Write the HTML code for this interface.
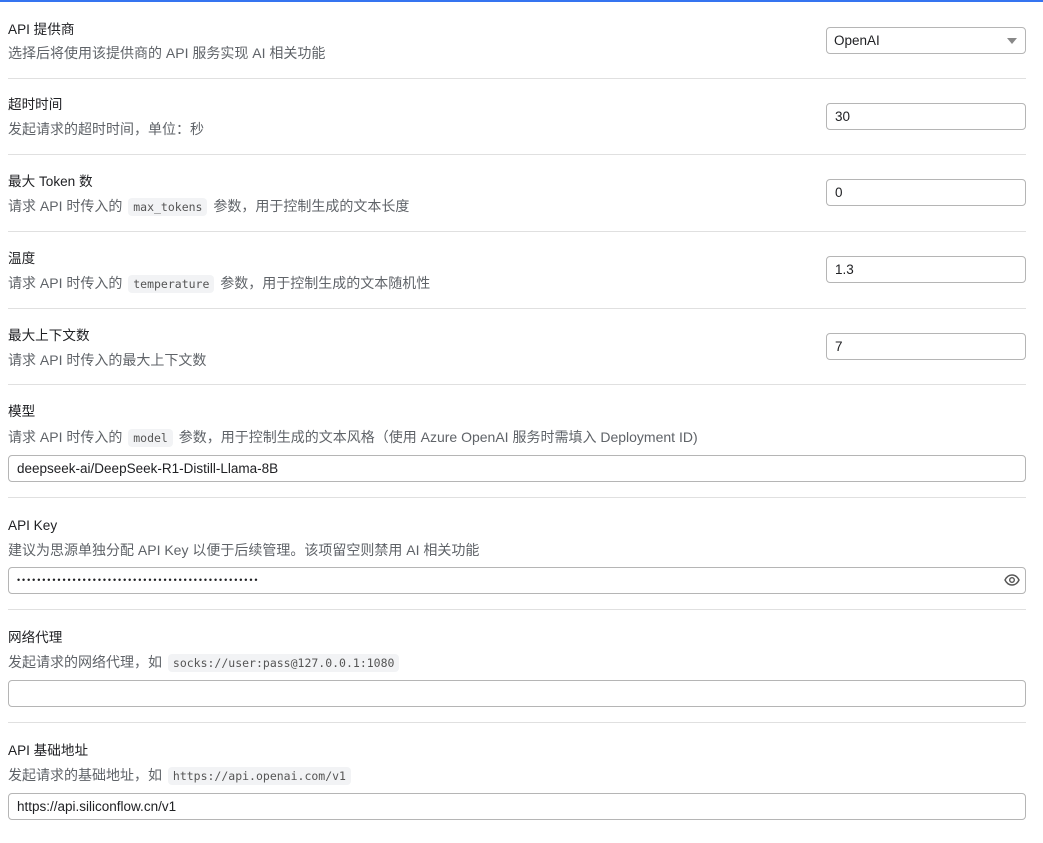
<!DOCTYPE html>
<html><head><meta charset="utf-8"><style>
*{box-sizing:border-box;margin:0;padding:0}
body{width:1043px;height:820px;overflow:hidden;background:#fff;font-family:"Liberation Sans","Noto Sans CJK SC",sans-serif;font-size:13px;color:#202124;position:relative;border-top:2px solid #3574f0}
.sec{position:absolute;left:8px;width:1018px;border-bottom:1px solid #e0e0e0}
.t{position:absolute;left:0;line-height:20px;font-size:13.6px;color:#202124}
.d{position:absolute;left:0;line-height:20px;font-size:14px;color:#5f6368;white-space:nowrap}
code{font-family:"DejaVu Sans Mono","Liberation Mono",monospace;font-size:11.5px;background:#f2f3f5;color:#555;border-radius:4px;padding:2px 5px;margin:0 2px}
.in{position:absolute;height:27px;border:1px solid #b5b5b5;border-radius:4px;background:#fff;padding:0 8px;line-height:25px;font-size:13.5px;color:#202124;white-space:nowrap;overflow:hidden}
</style></head><body>
<div class="sec" style="top:0;height:77px"><div class="t" style="top:18px">API 提供商</div><div class="d" style="top:41px">选择后将使用该提供商的 API 服务实现 AI 相关功能</div>
<div class="in" style="left:818px;top:25px;width:200px;padding-left:7px">OpenAI<svg style="position:absolute;right:8px;top:10px" width="10" height="6"><path d="M0 0H10L5 6Z" fill="#888"/></svg></div></div>
<div class="sec" style="top:77px;height:76px"><div class="t" style="top:16px">超时时间</div><div class="d" style="top:40px">发起请求的超时时间，单位：秒</div><div class="in" style="left:818px;top:24px;width:200px">30</div></div>
<div class="sec" style="top:153px;height:77px"><div class="t" style="top:17px">最大 Token 数</div><div class="d" style="top:41px">请求 API 时传入的 <code>max_tokens</code> 参数，用于控制生成的文本长度</div><div class="in" style="left:818px;top:24px;width:200px">0</div></div>
<div class="sec" style="top:230px;height:77px"><div class="t" style="top:17px">温度</div><div class="d" style="top:41px">请求 API 时传入的 <code>temperature</code> 参数，用于控制生成的文本随机性</div><div class="in" style="left:818px;top:24px;width:200px">1.3</div></div>
<div class="sec" style="top:307px;height:76px"><div class="t" style="top:17px">最大上下文数</div><div class="d" style="top:41px">请求 API 时传入的最大上下文数</div><div class="in" style="left:818px;top:24px;width:200px">7</div></div>
<div class="sec" style="top:383px;height:113px"><div class="t" style="top:17px">模型</div><div class="d" style="top:42px">请求 API 时传入的 <code>model</code> 参数，用于控制生成的文本风格（使用 Azure OpenAI 服务时需填入 Deployment ID)</div><div class="in" style="left:0;top:70px;width:1018px">deepseek-ai/DeepSeek-R1-Distill-Llama-8B</div></div>
<div class="sec" style="top:496px;height:112px"><div class="t" style="top:18px">API Key</div><div class="d" style="top:42px">建议为思源单独分配 API Key 以便于后续管理。该项留空则禁用 AI 相关功能</div><div class="in" style="left:0;top:69px;width:1018px;font-size:9px;letter-spacing:1.9px">••••••••••••••••••••••••••••••••••••••••••••••••<svg style="position:absolute;right:5px;top:6px" width="16" height="12" viewBox="0 0 16 12"><path d="M1 6C3 2 5.5 1 8 1S13 2 15 6C13 10 10.5 11 8 11S3 10 1 6Z" fill="none" stroke="#555" stroke-width="1.4"/><circle cx="8" cy="6" r="2.3" fill="none" stroke="#555" stroke-width="1.4"/></svg></div></div>
<div class="sec" style="top:608px;height:113px"><div class="t" style="top:18px">网络代理</div><div class="d" style="top:42px">发起请求的网络代理，如 <code>socks://user:pass@127.0.0.1:1080</code></div><div class="in" style="left:0;top:70px;width:1018px"></div></div>
<div class="sec" style="top:721px;height:120px;border:none"><div class="t" style="top:18px">API 基础地址</div><div class="d" style="top:42px">发起请求的基础地址，如 <code>https://api.openai.com/v1</code></div><div class="in" style="left:0;top:70px;width:1018px">https://api.siliconflow.cn/v1</div></div>
</body></html>
